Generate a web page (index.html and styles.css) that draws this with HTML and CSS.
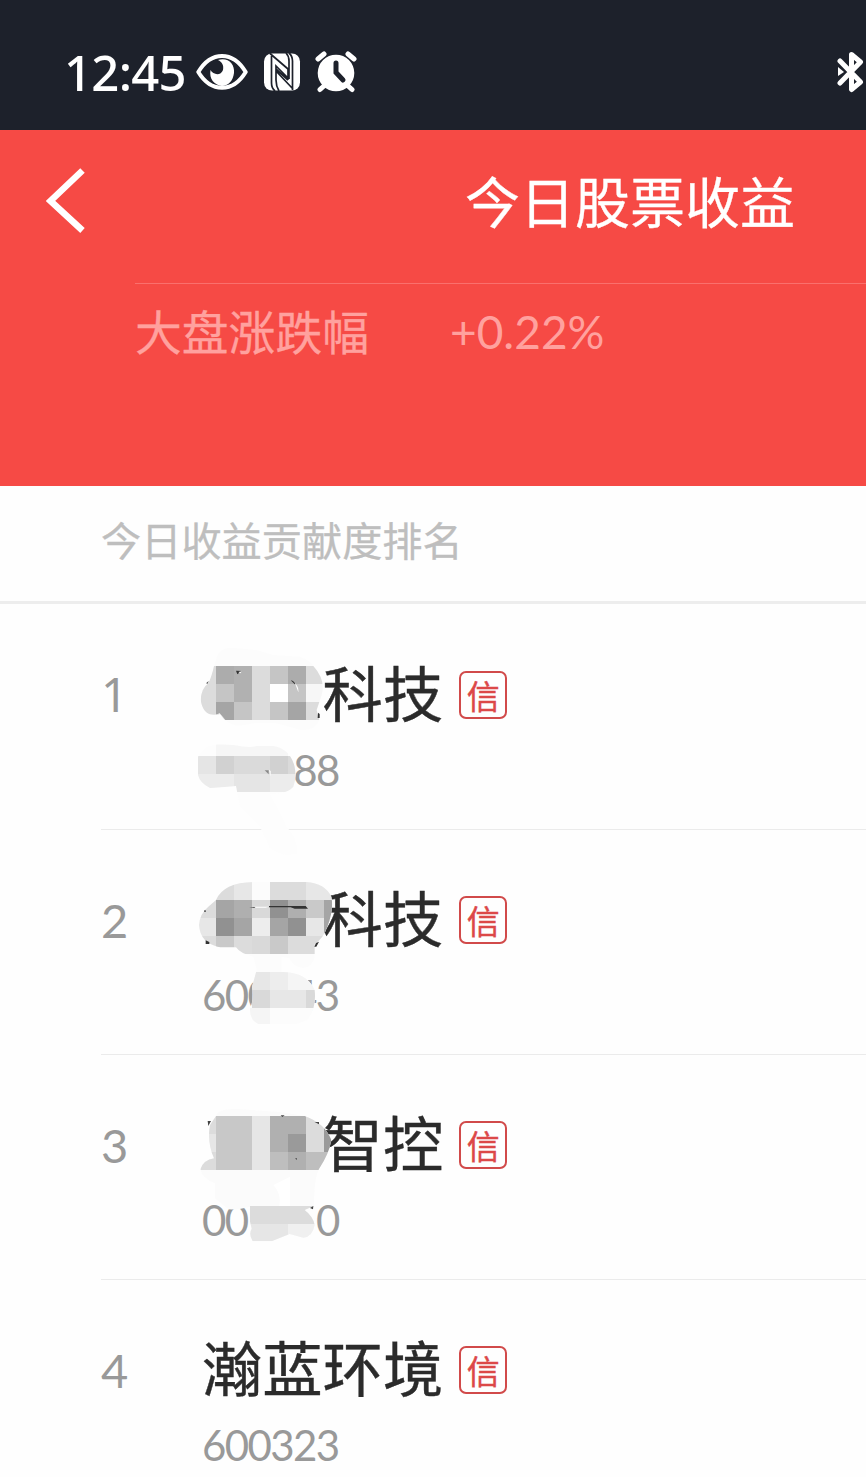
FILE: index.html
```html
<!DOCTYPE html>
<html lang="zh-CN">
<head>
<meta charset="utf-8">
<title>今日股票收益</title>
<link rel="stylesheet" href="styles.css">
</head>
<body>
<div class="status">
  <span class="time">12:45</span>
  <svg class="eye" width="52" height="40" viewBox="0 0 52 40"><path d="M2.300 20C15 -1.500 37 -1.500 49.700 20C37 41 15 41 2.300 20Z" fill="none" stroke="#fff" stroke-width="4" stroke-linejoin="round"/><path d="M22 8C32 5 39 12 38 21C37 29 32 34 26 34C18 33 13 27 14.500 18C17 23 25 24 27 18C28 13 26 10 22 8Z" fill="#fff"/></svg>
  <svg class="nfc" width="38" height="40" viewBox="0 0 38 40"><rect x="1" y="1.500" width="36" height="37" rx="8" fill="#fff"/><path d="M7 1.500L25 17V26L13 14V28Q13 34 16 39M8.500 4V31Q8.500 36 12 39M13 19L30 37M25 28L13 17M23 1Q26 4 26 9V27M26 1Q29.500 4 29.500 9V38" fill="none" stroke="#1d212b" stroke-width="1.700"/></svg>
  <svg class="alarm" width="42" height="42" viewBox="0 0 42 42"><circle cx="21" cy="22" r="18.300" fill="#fff"/><path d="M3 8L9 3M33 3L39 8M10 34L5 38.500M32 34L37 38.500" stroke="#fff" stroke-width="5" stroke-linecap="round"/><path d="M21 12V21.500L28 29" fill="none" stroke="#1d212b" stroke-width="5" stroke-linecap="round"/></svg>
  <svg class="bt" width="30" height="42" viewBox="0 0 30 42"><path d="M4 10L24.500 31L15.500 38.500V3.500L24.500 11L4 32" fill="none" stroke="#fff" stroke-width="5" stroke-linejoin="round" stroke-linecap="round"/><path d="M2 16L8 21L2 25Z" fill="#fff"/></svg>
</div>
<header class="hero">
  <div class="bar">
    <svg class="back" width="40" height="66" viewBox="0 0 40 66"><path d="M36.500 2.500L4.500 33L36.500 62.500" fill="none" stroke="#fff" stroke-width="6.500"/></svg>
    <h1 class="title">今日股票收益</h1>
  </div>
  <div class="index"><span class="index-label">大盘涨跌幅</span><span class="index-value">+0.22%</span></div>
</header>
<div class="section">今日收益贡献度排名</div>
<main class="list">
  <div class="row">
    <span class="rank one">1</span>
    <div class="stock">
      <div class="name"><span class="gap2"></span>科技<span class="tag">信</span></div>
      <div class="code"><span class="gap4"></span>88</div>
    </div>
    <svg class="mask first" width="160" height="225" viewBox="0 0 480 675">
      <defs>
        <clipPath id="a1"><path d="M78 60Q85 23 125 23L200 30L250 45L330 50Q362 62 370 78Q408 120 395 165L380 210L388 240Q375 275 330 269L260 250Q210 245 180 252Q130 265 105 240L90 222Q40 235 32 180Q34 145 55 130Q65 110 72 78Z"/></clipPath>
        <clipPath id="a2"><path d="M24 350Q45 313 90 313L130 315Q180 325 200 318H250Q300 326 314 380Q320 415 310 440Q295 460 240 462L290 560Q325 600 322 640Q280 655 240 625L210 560L150 500L138 438Q85 443 60 444Q30 430 24 405Z"/></clipPath>
      </defs>
      <g clip-path="url(#a1)"><path fill="#fcfcfc" d="M20 10h390v270H20z"/><path fill="#dcdcdc" d="M24 78h54v54H24zM186 78h54v108h-54zM348 78h54v54h-54zM24 132h54v108H24zM186 186h54v54h-54zM348 186h54v54h-54z"/><path fill="#acacac" d="M78 78h54v54H78zM294 78h54v54h-54z"/><path fill="#b1b1b1" d="M132 78h54v108h-54z"/><path fill="#c5c5c5" d="M240 78h54v54h-54zM78 132h54v54H78zM132 186h54v54h-54zM240 186h54v54h-54zM294 132h54v54h-54z"/><path fill="#a5a5a5" d="M78 186h54v54H78zM294 186h54v54h-54z"/><path fill="#f7f7f7" d="M348 132h54v54h-54z"/><path fill="#fff" d="M240 132h54v54h-54zM78 240h28l-17-20-11 4z"/></g>
      <path d="M138 92l18 1-9 6-5 4zM302 121q12 2 14 13zM384 218l5 4v12h-6z" fill="#333"/><path d="M48 130l8-7-3 8z" fill="#555"/><path d="M145 96l11-2-5 6zM315 130q12 12 10 27z" fill="#fff"/>
      <g clip-path="url(#a2)"><path fill="#fdfdfd" d="M20 300h310v370H20z"/><path fill="#f6f6f6" d="M78 312h216v36H78z"/><path fill="#e5e5e5" d="M24 348h54v54H24zM132 402h108v54H132z"/><path fill="#d1d1d1" d="M78 348h54v54H78zM240 348h54v54h-54z"/><path fill="#dadada" d="M132 348h108v54H132zM294 348h30v54h-30z"/><path fill="#ececec" d="M24 402h108v54H24zM240 402h84v54h-84z"/></g><path d="M224 391h12v12z" fill="#888"/><path d="M237 389l5 4v16z" fill="#fff"/>
    </svg>
  </div>
  <div class="row">
    <span class="rank">2</span>
    <div class="stock">
      <div class="name"><span class="gap2"></span>科技<span class="tag">信</span></div>
      <div class="code">600<span class="gap1"></span>43</div>
    </div>
    <svg class="mask second" width="160" height="160" viewBox="0 0 480 480">
      <defs><clipPath id="b1"><path d="M78 90Q100 38 190 36H350Q405 40 424 80Q432 120 412 170Q400 205 374 222V260Q368 290 340 294Q310 292 298 265L274 260V306Q350 305 374 360Q380 415 352 450L320 462H205Q178 450 180 415Q192 390 186 350L200 300L190 260Q150 250 138 232H90Q30 220 27 165Q30 130 55 110Z"/></clipPath></defs>
      <g clip-path="url(#b1)"><path fill="#fcfcfc" d="M20 20h410v450H20z"/><path fill="#dcdcdc" d="M78 36h54v54H78zM240 36h108v54H240zM24 90h54v54H24zM24 198h108v54H24zM132 198h54v54h-54zM294 198h108v54H294z"/><path fill="#e7e7e7" d="M132 36h54v54h-54zM348 36h80v54h-80zM24 144h54v54H24zM348 144h54v54h-54zM186 306h54v54h-54zM240 360h108v54H240z"/><path fill="#a5a5a5" d="M78 90h54v54H78zM240 144h54v54h-54zM132 144h54v54h-54zM402 90h30v108h-30z"/><path fill="#919191" d="M78 144h54v54H78zM294 144h54v54h-54zM240 90h54v54h-54z"/><path fill="#afafaf" d="M132 90h54v54h-54zM294 90h54v54h-54z"/><path fill="#d9d9d9" d="M186 90h54v54h-54zM186 198h54v54h-54zM186 360h54v54h-54zM348 360h40v54h-40z"/><path fill="#c9c9c9" d="M348 90h54v54h-54zM78 198h54v34H78zM240 198h54v54h-54z"/><path fill="#ededed" d="M186 144h54v54h-54zM240 306h54v54h-54z"/><path fill="#f5f5f5" d="M294 306h80v54h-80zM180 414h60v54h-60z"/></g>
      <path d="M178 111h18v3zM237 108h110l7 8h-40l-12-4h-65zM47 211l11 5v6H47zM378 219l9-4-8 15h-6zM43 121h4v5h-4z" fill="#333"/><path d="M194 110h43l-10 3h-33z" fill="#fff"/>
    </svg>
  </div>
  <div class="row">
    <span class="rank">3</span>
    <div class="stock">
      <div class="name"><span class="gap2"></span>智控<span class="tag">信</span></div>
      <div class="code">00<span class="gap3"></span>0</div>
    </div>
    <svg class="mask third" width="160" height="150" viewBox="0 0 480 450">
      <defs><clipPath id="c1"><path d="M78 48Q85 25 140 27L270 36L344 48Q405 70 424 120Q418 160 387 207Q372 235 372 318L344 330Q370 350 374 375Q367 412 340 413L299 402L245 424H188Q175 402 185 386Q174 350 180 320Q145 330 115 328L75 295V250Q35 235 31 208Q40 180 72 175Q50 125 60 75Z"/></clipPath></defs>
      <g clip-path="url(#c1)"><path fill="#fbfbfb" d="M20 20h410v420H20z"/><path fill="#dcdcdc" d="M24 48h54v54H24zM24 156h54v54H24zM180 318h200v54H180zM348 48h54v108h-54z"/><path fill="#c8c8c8" d="M78 48h108v162H78z"/><path fill="#e6e6e6" d="M186 48h54v162h-54zM24 102h54v54H24zM180 372h114v54H180z"/><path fill="#b0b0b0" d="M240 48h54v108h-54zM294 48h54v54h-54zM294 156h54v54h-54z"/><path fill="#9a9a9a" d="M294 102h54v54h-54zM402 48h30v108h-30z"/><path fill="#bebebe" d="M240 156h54v54h-54zM348 156h70v54h-70z"/><path fill="#f0f0f0" d="M294 372h90v54h-90z"/><path fill="#fff" d="M270 245L300 230V318H268Q275 280 250 255z"/></g>
      <path d="M53 63h10l-8 15zM272 46h12l-7 5zM374 66h13v7zM316 174l5 1-2 6zM360 324l10-6-1 10z" fill="#444"/>
    </svg>
  </div>
  <div class="row">
    <span class="rank">4</span>
    <div class="stock">
      <div class="name">瀚蓝环境<span class="tag">信</span></div>
      <div class="code">600323</div>
    </div>
  </div>
</main>
</body>
</html>
```
FILE: styles.css
```css
* { box-sizing: border-box; }
body { margin: 0; width: 866px; height: 1477px; overflow: hidden; background: #fefefe; font-family: "Noto Sans CJK SC", sans-serif; }
svg { display: block; flex: none; }
.status { display: flex; align-items: center; height: 130px; padding: 14px 0 0 64px; background: #1d212b; color: #fff; }
.time { width: 132px; font: 500 49px/60px "Noto Sans", sans-serif; letter-spacing: -.7px; white-space: nowrap; }
.nfc { margin-left: 15px; }
.alarm { margin-left: 14px; }
.bt { margin-left: auto; }
.hero { height: 356px; background: #f64a45; }
.bar { display: flex; align-items: center; height: 153px; padding: 0 0 11px 46px; }
.title { margin: 0 0 4px 379px; color: #fff; font-size: 55px; line-height: 80px; font-weight: 400; white-space: nowrap; -webkit-text-stroke: .3px; }
.index { display: flex; align-items: center; height: 98px; margin-left: 135px; padding-bottom: 5px; border-top: 1px solid #fa706d; color: #ffa19e; }
.index-label { width: 315px; font-size: 46.800px; line-height: 70px; -webkit-text-stroke: .3px; }
.index-value { padding-top: 4px; font: 400 46px/70px Lato, sans-serif; }
.section { height: 118px; padding-left: 101px; border-bottom: 3px solid #ededed; color: #bebebe; font-size: 40.200px; line-height: 105px; -webkit-text-stroke: .3px; }
.list { padding-top: 1px; }
.row { position: relative; display: flex; height: 225px; margin-left: 101px; border-bottom: 1px solid #ebebeb; }
.rank { width: 101px; padding-top: 54px; color: #999; font: 400 47px/72px Lato, sans-serif; }
.rank.one { font-family: "Noto Sans", sans-serif; line-height: 70px; }
.stock { padding-top: 41px; }
.name { display: flex; align-items: center; height: 90px; color: #2b2b2b; font-size: 60.300px; line-height: 90px; white-space: nowrap; -webkit-text-stroke: .4px; }
.tag { display: flex; align-items: center; justify-content: center; width: 48px; height: 48px; margin: 8px 0 0 16px; border: 2px solid #d14a4a; border-radius: 7px; color: #dc4848; font-size: 33px; line-height: 44px; }
.code { display: flex; height: 62px; margin-top: 3px; color: #999; font: 400 42px/62px Lato, sans-serif; letter-spacing: -1.600px; }
.gap1 { width: 22.800px; }
.gap2 { width: 120.600px; }
.gap3 { width: 68.400px; }
.gap4 { width: 91.200px; }
.mask { position: absolute; left: 89px; z-index: 1; }
.first { top: 35px; }
.second { top: 40px; }
.third { top: 45px; }
```
